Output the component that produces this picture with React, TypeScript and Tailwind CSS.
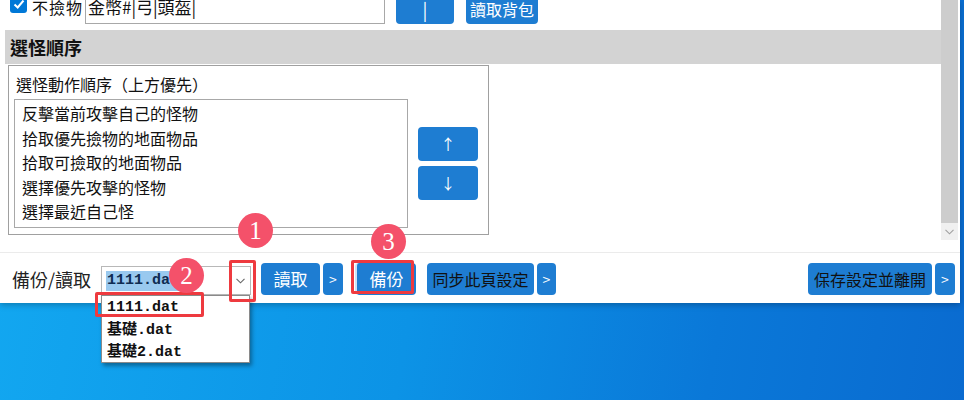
import React from "react"

const cjk = { fontFamily: '"Noto Sans CJK TC", "Noto Sans", sans-serif' }
const mono = { fontFamily: '"Liberation Mono", "Noto Sans CJK TC", monospace' }

const orderItems = ["反擊當前攻擊自己的怪物", "拾取優先撿物的地面物品", "拾取可撿取的地面物品", "選擇優先攻擊的怪物", "選擇最近自己怪"]
const backups = ["1111.dat", "基礎.dat", "基礎2.dat"]

function Marker({ n, className }: { n: string; className: string }) {
  return (
    <div
      className={`absolute w-[35px] h-[35px] rounded-full bg-[#f4516a] text-white text-[25px] leading-[35px] text-center ${className}`}
      style={{ fontFamily: '"Liberation Serif", serif' }}
    >
      {n}
    </div>
  )
}

export default function App() {
  return (
    <div
      className="relative w-[964px] h-[400px] overflow-hidden bg-[linear-gradient(100deg,#13a9f1_0%,#0c93e6_45%,#0a78d8_75%,#0a6bd0_100%)]"
      style={cjk}
    >
      {/* app window */}
      <div className="w-[960px] h-[303px] bg-white flex flex-col shadow-[0_2px_6px_rgba(0,0,0,0.25)]">
        <div className="h-[252px] flex overflow-hidden">
          <div className="w-[941px] flex flex-col">
            {/* top row, scrolled partly out */}
            <div className="-mt-[10px] h-[34px] flex items-start text-[#111]">
              <div className="ml-[10px] mt-[5px] w-[17px] h-[18px] rounded-[3px] bg-[#0078d7] flex items-center justify-center">
                <svg width="14" height="14" viewBox="0 0 14 14">
                  <path d="M2.5 7.5 L5.7 10.5 L11.5 3.5" stroke="white" strokeWidth="2" fill="none" />
                </svg>
              </div>
              <div className="ml-[5px] w-[53px] text-[16px] leading-[34px] tracking-[1px]">不撿物</div>
              <div className="w-[300px] h-[34px] border border-[#a8a8a8] pl-[2px] text-[17px] leading-[32px]">
                金幣#|弓|頭盔|
              </div>
              <button className="ml-[11px] mt-[4px] w-[58px] h-[30px] rounded-[4px] bg-[#1e7dd2] text-white text-[18px] leading-none">|</button>
              <button className="ml-[12px] mt-[4px] w-[72px] h-[30px] rounded-[4px] bg-[#1e7dd2] text-white text-[16px]">讀取背包</button>
            </div>

            <div className="mt-[6px] ml-[5px] h-[34px] bg-[#d3d3d3] pl-[5px] text-[18px] font-bold leading-[34px] text-[#111]">
              選怪順序
            </div>

            <div className="mt-[1px] ml-[8px] w-[481px] h-[170px] border border-[#a0a0a0] flex flex-col">
              <div className="pt-[8px] pl-[7px] text-[16px] leading-[20px] text-[#111]">選怪動作順序（上方優先）</div>
              <div className="mt-[5px] pl-[5px] flex items-start">
                <div className="w-[394px] h-[129px] border border-[#a8a8a8] pt-[1px] pl-[7px] text-[16px] leading-[24.5px] text-[#111]">
                  {orderItems.map((t) => (
                    <div key={t}>{t}</div>
                  ))}
                </div>
                <div className="ml-[10px] mt-[28px] flex flex-col gap-[5px]">
                  <button className="w-[60px] h-[34px] rounded-[4px] bg-[#1e7dd2] text-white text-[15px]">↑</button>
                  <button className="w-[60px] h-[34px] rounded-[4px] bg-[#1e7dd2] text-white text-[15px]">↓</button>
                </div>
              </div>
            </div>
          </div>

          {/* scrollbar */}
          <div className="w-[17px] flex flex-col">
            <div className="h-[223px] bg-[#cdcdcd]" />
            <div className="h-[17px] bg-[#f0f0f0] flex items-center justify-center">
              <svg width="9" height="6" viewBox="0 0 9 6">
                <path d="M0.5 0.8 L4.5 4.8 L8.5 0.8" stroke="#a0a0a0" strokeWidth="1.1" fill="none" />
              </svg>
            </div>
          </div>
        </div>

        <div className="h-[1px] bg-[#ebebeb]" />

        {/* bottom bar */}
        <div className="h-[50px] flex items-start">
          <div className="w-[101px] pl-[12px] text-[18px] leading-[52px] text-[#222]">備份/讀取</div>
          <div className="mt-[13px] w-[150px] h-[29px] border border-[#b8b8b8] flex items-center pl-[4px] pr-[5px]">
            <span className="bg-[#99c9ef] text-[#0f2c52] text-[15px] font-bold leading-[20px] px-[1px]" style={mono}>
              1111.dat
            </span>
            <div className="flex-1" />
            <svg width="9" height="6" viewBox="0 0 9 6">
              <path d="M0.5 0.8 L4.5 4.8 L8.5 0.8" stroke="#666" strokeWidth="1.1" fill="none" />
            </svg>
          </div>
          <button className="ml-[10px] mt-[10px] w-[59px] h-[32px] rounded-[4px] bg-[#1e7dd2] text-white text-[17px]">讀取</button>
          <button className="ml-[3px] mt-[10px] w-[20px] h-[32px] rounded-[4px] bg-[#1e7dd2] text-white text-[14px]">&gt;</button>
          <button className="ml-[12px] mt-[10px] w-[61px] h-[32px] rounded-[4px] bg-[#1e7dd2] text-white text-[17px] border-l-[2px] border-[#cfe3f6]">備份</button>
          <button className="ml-[11px] mt-[10px] w-[107px] h-[32px] rounded-[4px] bg-[#1e7dd2] text-[#111] text-[16px]">同步此頁設定</button>
          <button className="ml-[3px] mt-[10px] w-[19px] h-[32px] rounded-[4px] bg-[#1e7dd2] text-white text-[14px]">&gt;</button>
          <div className="flex-1" />
          <button className="mt-[10px] w-[124px] h-[32px] rounded-[4px] bg-[#1e7dd2] text-[#111] text-[16px]">保存設定並離開</button>
          <button className="ml-[3px] mr-[5px] mt-[10px] w-[20px] h-[32px] rounded-[4px] bg-[#1e7dd2] text-white text-[14px]">&gt;</button>
        </div>
      </div>

      {/* open dropdown list */}
      <div className="absolute left-[101px] top-[295px] w-[149px] h-[68px] bg-white border border-[#8a8a8a] shadow-[2px_3px_4px_rgba(0,0,0,0.35)] pt-[1px] pl-[5px]">
        {backups.map((b) => (
          <div key={b} className="h-[22.5px] text-[15px] font-bold leading-[22.5px] text-[#111]" style={mono}>
            {b}
          </div>
        ))}
      </div>

      {/* annotations */}
      <div className="absolute left-[229px] top-[260px] w-[27px] h-[42px] border-[3px] border-[#ee3a3f] rounded-[2px]" />
      <div className="absolute left-[95px] top-[292px] w-[109px] h-[25px] border-[3px] border-[#ee3a3f] rounded-[2px]" />
      <div className="absolute left-[351px] top-[260px] w-[63px] h-[34px] border-[3px] border-[#ee3a3f] rounded-[2px]" />
      <Marker n="1" className="left-[238px] top-[213px]" />
      <Marker n="2" className="left-[169px] top-[258px]" />
      <Marker n="3" className="left-[371px] top-[224px]" />
    </div>
  )
}
